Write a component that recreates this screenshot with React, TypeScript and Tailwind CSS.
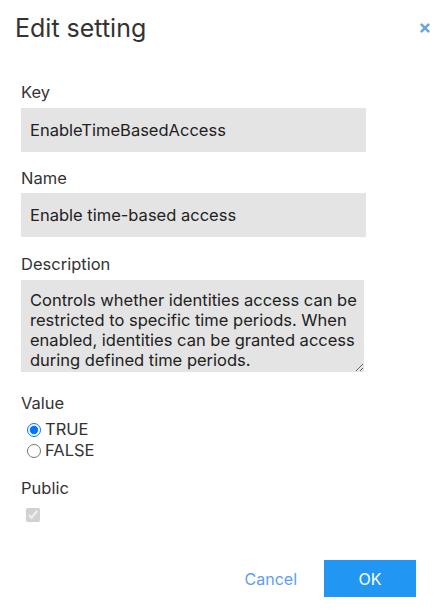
import React from "react";

export default function App() {
  return (
    <div className="w-[439px] h-[612px] bg-white text-[#333333] flex flex-col font-['Inter','Noto_Sans',sans-serif]">
      <div className="flex items-start justify-between pl-[15px] pr-[9px] pt-[12px]">
        <h1 className="text-[25px] leading-[32px] font-normal text-[#333333]">Edit setting</h1>
        <button className="mt-[11px] w-[10px] h-[10px] flex items-center justify-center" aria-label="Close">
          <svg width="10" height="10" viewBox="0 0 10 10">
            <path d="M1.6 1.6 L8.4 8.4 M8.4 1.6 L1.6 8.4" stroke="#6aa6dc" strokeWidth="2.6" strokeLinecap="round" />
          </svg>
        </button>
      </div>

      <div className="pl-[21px] pt-[38px] flex flex-col items-start">
        <label className="text-[16.5px] leading-[20px] h-[20px]">Key</label>
        <input
          readOnly
          value="EnableTimeBasedAccess"
          className="mt-[6px] h-[44px] w-[345px] bg-[#e4e4e4] px-[9px] text-[16.5px] text-[#222222] outline-none"
        />
        <label className="mt-[16px] text-[16.5px] leading-[20px] h-[20px]">Name</label>
        <input
          readOnly
          value="Enable time-based access"
          className="mt-[5px] h-[44px] w-[345px] bg-[#e4e4e4] px-[9px] text-[16.5px] text-[#222222] outline-none"
        />
        <label className="mt-[17px] text-[16.5px] leading-[20px] h-[20px]">Description</label>
        <textarea
          readOnly
          value="Controls whether identities access can be restricted to specific time periods. When enabled, identities can be granted access during defined time periods."
          className="mt-[6px] h-[92px] w-[343px] bg-[#e4e4e4] pl-[9px] pr-[4px] pt-[10px] text-[16.5px] leading-[20px] text-[#222222] outline-none resize-y"
        />
        <label className="mt-[21px] text-[16.5px] leading-[20px] h-[20px]">Value</label>
        <div className="mt-[6px] flex flex-col">
          <label className="flex items-center h-[21px] text-[16.5px]">
            <input type="radio" name="v" defaultChecked className="ml-[6px] mr-[4px] w-[14px] h-[14px] accent-[#0075ff]" />
            TRUE
          </label>
          <label className="flex items-center h-[21px] text-[16.5px]">
            <input type="radio" name="v" className="ml-[6px] mr-[4px] w-[14px] h-[14px]" />
            FALSE
          </label>
        </div>
        <label className="mt-[17px] text-[16.5px] leading-[20px] h-[20px]">Public</label>
        <div className="mt-[9px] h-[15px] flex items-center">
          <input type="checkbox" defaultChecked disabled className="ml-[5px] w-[14px] h-[14px]" />
        </div>
      </div>

      <div className="mt-auto mb-[15px] flex justify-end items-center pr-[23px]">
        <button className="text-[16px] text-[#5d9ef0] mr-[27px]">Cancel</button>
        <button className="w-[92px] h-[37px] bg-[#2196f3] text-white text-[16px]">OK</button>
      </div>
    </div>
  );
}
